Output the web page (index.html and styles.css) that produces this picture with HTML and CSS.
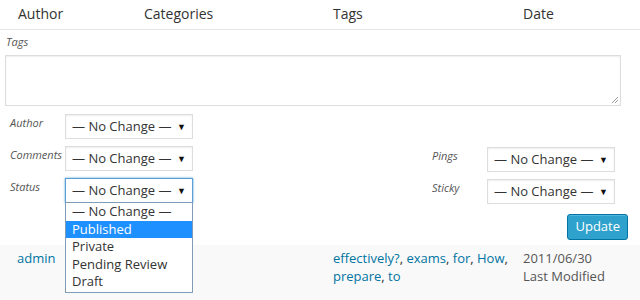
FILE: index.html
```html
<!DOCTYPE html>
<html lang="en">
<head>
    <meta charset="UTF-8">
    <title>Bulk Edit</title>
    <link rel="stylesheet" href="styles.css">
</head>
<body>

<div class="head">
    <div class="col">Author</div>
    <div class="col">Categories</div>
    <div class="col">Tags</div>
    <div class="col">Date</div>
</div>

<div class="edit">
    <div class="label">Tags</div>
    <div class="area"><span class="grip"></span></div>

    <div class="fields">
        <div class="side">
            <div class="row">
                <span class="label name">Author</span>
                <div class="select">— No Change —<span class="arrow">▼</span></div>
            </div>
            <div class="row">
                <span class="label name">Comments</span>
                <div class="select">— No Change —<span class="arrow">▼</span></div>
            </div>
            <div class="row">
                <span class="label name">Status</span>
                <div class="select open">— No Change —<span class="arrow">▼</span>
                    <ul class="menu">
                        <li>— No Change —</li>
                        <li class="on">Published</li>
                        <li>Private</li>
                        <li>Pending Review</li>
                        <li>Draft</li>
                    </ul>
                </div>
            </div>
        </div>
        <div class="side right">
            <div class="row">
                <span class="label name">Pings</span>
                <div class="select">— No Change —<span class="arrow">▼</span></div>
            </div>
            <div class="row">
                <span class="label name">Sticky</span>
                <div class="select">— No Change —<span class="arrow">▼</span></div>
            </div>
        </div>
    </div>

    <div class="actions">
        <a class="button">Update</a>
    </div>
</div>

<div class="post">
    <div class="cell"><a>admin</a></div>
    <div class="cell"><a>effectively?</a>, <a>exams</a>, <a>for</a>, <a>How</a>, <a>prepare</a>, <a>to</a></div>
    <div class="cell date">2011/06/30<br>Last Modified</div>
</div>

</body>
</html>
```

FILE: styles.css
```css
body {
    margin: 0;
    font-family: "Open Sans", sans-serif;
    color: #333;
    background: #fff;
}
.head {
    display: grid;
    grid-template-columns: 126px 189px 190px 1fr;
    height: 29px;
    line-height: 28px;
    font-size: 14px;
    border-bottom: 1px solid #e5e5e5;
}
.head .col {
    padding-left: 18px;
}
.edit {
    padding: 4px 12px 5px 5px;
    position: relative;
}
.label {
    font-size: 11px;
    font-style: italic;
    color: #555;
    padding-left: 1px;
    line-height: 16px;
}
.area {
    height: 49px;
    margin-top: 5px;
    margin-right: 7px;
    border: 1px solid #ddd;
    box-shadow: inset 0 1px 2px rgba(0, 0, 0, 0.07);
    position: relative;
}
.grip {
    position: absolute;
    right: 2px;
    bottom: 2px;
    width: 6px;
    height: 6px;
    background: linear-gradient(135deg, transparent 45%, #999 45%, #999 55%, transparent 55%, transparent 70%, #999 70%, #999 80%, transparent 80%);
}
.fields {
    display: flex;
    margin-top: 8px;
}
.side {
    flex: 0 0 422px;
}
.side.right {
    flex: 1;
    padding-top: 33px;
}
.row {
    display: flex;
    align-items: flex-start;
    margin-bottom: 7px;
}
.name {
    width: 55px;
    padding-left: 5px;
    padding-top: 1px;
}
.select {
    position: relative;
    width: 114px;
    height: 23px;
    line-height: 23px;
    padding-left: 6px;
    padding-right: 6px;
    font-size: 13px;
    color: #333;
    border: 1px solid #ddd;
    box-shadow: inset 0 1px 2px rgba(0, 0, 0, 0.07);
    background: #fff;
}
.select .arrow {
    position: absolute;
    right: 6px;
    top: 0;
    font-size: 9px;
    color: #111;
}
.select.open {
    border-color: #5b9dd9;
    box-shadow: 0 0 2px rgba(30, 140, 190, 0.8);
}
.menu {
    position: absolute;
    left: -1px;
    top: 23px;
    width: 126px;
    margin: 0;
    padding: 0 0 1px;
    list-style: none;
    background: #fff;
    border: 1px solid #7f9db9;
    z-index: 2;
}
.menu li {
    height: 17.6px;
    line-height: 17.6px;
    padding-left: 6px;
    font-size: 13px;
    color: #333;
}
.menu li.on {
    background: #1e90ff;
    color: #fff;
}
.actions {
    display: flex;
    justify-content: flex-end;
    margin-top: 3px;
}
.button {
    display: inline-block;
    height: 24px;
    line-height: 23px;
    padding: 0 7px;
    font-size: 13px;
    color: #fff;
    background: #2ea2cc;
    border: 1px solid #0074a2;
    border-radius: 3px;
    box-shadow: inset 0 1px 0 rgba(120, 200, 230, 0.5);
}
.post {
    display: grid;
    grid-template-columns: 316px 190px 1fr;
    background: #f9f9f9;
    padding: 4px 0 16px 17px;
    font-size: 13px;
    line-height: 18px;
}
.post a {
    color: #0074a2;
}
.post .cell:nth-child(2) {
    padding-right: 10px;
}
.date {
    color: #555;
}
```
